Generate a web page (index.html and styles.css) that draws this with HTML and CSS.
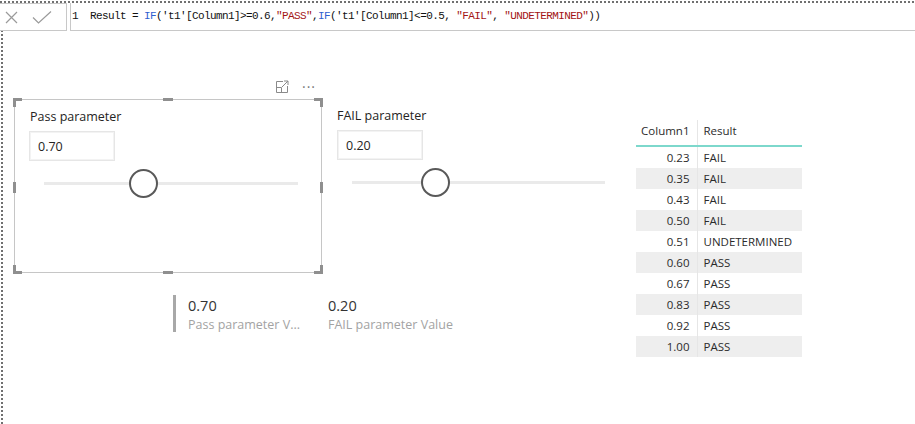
FILE: index.html
```html
<!DOCTYPE html>
<html>
<head>
<meta charset="utf-8">
<link rel="stylesheet" href="styles.css">
</head>
<body>
<div class="page">
  <div class="formulabar">
    <div class="fb-actions">
      <svg class="fb-icon" width="13" height="13" viewBox="0 0 13 13"><path d="M1 1 L12 12 M12 1 L1 12" stroke="#9a9a9a" stroke-width="1.2" fill="none"/></svg>
      <svg class="fb-icon check" width="20" height="13" viewBox="0 0 20 13"><path d="M1 6.5 L6.5 12 L19 0.5" stroke="#9a9a9a" stroke-width="1.2" fill="none"/></svg>
    </div>
    <div class="fb-formula"><span>1  Result = <span class="kw">IF</span>('t1'[Column1]&gt;=0.6,<span class="str">"PASS"</span>,<span class="kw">IF</span>('t1'[Column1]&lt;=0.5, <span class="str">"FAIL"</span>, <span class="str">"UNDETERMINED"</span>))</span></div>
  </div>

  <div class="canvas">
    <div class="visual slicer framed">
      <div class="vis-header">
        <svg width="15" height="14" viewBox="0 0 15 14"><path d="M8 1.5 H1.5 V12.5 H12.5 V6" stroke="#8a8a8a" stroke-width="1" fill="none"/><path d="M1.5 7.5 H6.5 V12.5" stroke="#8a8a8a" stroke-width="1" fill="none"/><path d="M7 7 L13 1 M9 1 H13 V5" stroke="#8a8a8a" stroke-width="1" fill="none"/></svg>
        <span class="more">···</span>
      </div>
      <span class="h h-tl"></span><span class="h h-tr"></span><span class="h h-bl"></span><span class="h h-br"></span>
      <span class="h h-tm"></span><span class="h h-bm"></span><span class="h h-lm"></span><span class="h h-rm"></span>
      <div class="slicer-title">Pass parameter</div>
      <div class="slicer-input first">0.70</div>
      <div class="slider s1"><div class="track"></div><div class="thumb" style="left:85px"></div></div>
    </div>

    <div class="visual slicer second">
      <div class="slicer-title">FAIL parameter</div>
      <div class="slicer-input">0.20</div>
      <div class="slider s2"><div class="track"></div><div class="thumb" style="left:69px"></div></div>
    </div>

    <div class="visual card">
      <div class="card-bar"></div>
      <div class="card-col c1">
        <div class="card-val">0.70</div>
        <div class="card-lbl">Pass parameter V...</div>
      </div>
      <div class="card-col">
        <div class="card-val">0.20</div>
        <div class="card-lbl">FAIL parameter Value</div>
      </div>
    </div>

    <div class="visual tbl">
      <table>
        <thead><tr><th class="num">Column1</th><th class="res">Result</th></tr></thead>
        <tbody>
          <tr><td class="num">0.23</td><td class="res">FAIL</td></tr>
          <tr><td class="num">0.35</td><td class="res">FAIL</td></tr>
          <tr><td class="num">0.43</td><td class="res">FAIL</td></tr>
          <tr><td class="num">0.50</td><td class="res">FAIL</td></tr>
          <tr><td class="num">0.51</td><td class="res">UNDETERMINED</td></tr>
          <tr><td class="num">0.60</td><td class="res">PASS</td></tr>
          <tr><td class="num">0.67</td><td class="res">PASS</td></tr>
          <tr><td class="num">0.83</td><td class="res">PASS</td></tr>
          <tr><td class="num">0.92</td><td class="res">PASS</td></tr>
          <tr><td class="num">1.00</td><td class="res">PASS</td></tr>
        </tbody>
      </table>
    </div>
  </div>
</div>
</body>
</html>
```
FILE: styles.css
```css
html, body {
  margin: 0;
  padding: 0;
  background: #fff;
}
body {
  font-family: "Open Sans", "Noto Sans", sans-serif;
  color: #252423;
}
.page {
  width: 915px;
  height: 424px;
  overflow: hidden;
  background-image:
    repeating-linear-gradient(to right, #707070 0 2px, transparent 2px 4px),
    repeating-linear-gradient(to bottom, #707070 0 2px, transparent 2px 4px);
  background-size: 100% 2px, 2px 400px;
  background-position: 0 1px, 1px 30px;
  background-repeat: no-repeat;
}
.formulabar {
  display: flex;
  height: 28px;
  padding-top: 3px;
}
.fb-actions {
  width: 67px;
  box-sizing: border-box;
  border: 1px solid #c8c8c8;
  border-left: none;
  background: #fff;
  display: flex;
  align-items: center;
  padding-left: 5px;
  padding-top: 1px;
  gap: 14px;
}
.fb-icon { display: block; }
.fb-formula {
  flex: 1;
  margin-left: 3px;
  box-sizing: border-box;
  border-left: 1px solid #c8c8c8;
  border-bottom: 1px solid #c8c8c8;
  background: #fff;
  font-family: "Liberation Mono", "DejaVu Sans Mono", monospace;
  font-size: 11px;
  letter-spacing: -0.6px;
  line-height: 26px;
  padding-left: 1px;
  color: #111;
  white-space: pre;
}
.kw { color: #2f5fd0; }
.str { color: #a31515; }

.canvas {
  position: relative;
  height: 393px;
}
.visual { position: absolute; }

.slicer {
  top: 68px;
  box-sizing: border-box;
  padding: 8px 0 0 15px;
  display: flex;
  flex-direction: column;
  align-items: flex-start;
}
.framed {
  left: 14px;
  width: 308px;
  height: 174px;
  border: 1px solid #c6c6c6;
}
.second {
  left: 322px;
  width: 300px;
  height: 174px;
}
.vis-header {
  position: absolute;
  top: -20px;
  right: 5px;
  display: flex;
  align-items: center;
  gap: 12px;
}
.vis-header svg { display: block; }
.more {
  font-size: 14px;
  color: #777;
  letter-spacing: 1px;
  line-height: 14px;
}
.h {
  position: absolute;
  background: #8f8f8f;
}
.h-tl, .h-tr, .h-bl, .h-br {
  background: transparent;
  width: 9px;
  height: 9px;
  border: 0 solid #8f8f8f;
  box-sizing: border-box;
}
.h-tl { top: -2px; left: -2px; border-top-width: 3px; border-left-width: 3px; }
.h-tr { top: -2px; right: -2px; border-top-width: 3px; border-right-width: 3px; }
.h-bl { bottom: -2px; left: -2px; border-bottom-width: 3px; border-left-width: 3px; }
.h-br { bottom: -2px; right: -2px; border-bottom-width: 3px; border-right-width: 3px; }
.h-tm { top: -2px; left: 148px; width: 10px; height: 3px; }
.h-bm { bottom: -2px; left: 148px; width: 10px; height: 3px; }
.h-lm { left: -2px; top: 82px; width: 3px; height: 11px; }
.h-rm { right: -2px; top: 82px; width: 3px; height: 11px; }

.slicer-title {
  font-size: 12.5px;
  line-height: 18px;
  height: 18px;
  color: #252423;
}
.slicer-input {
  margin-top: 5px;
  width: 86px;
  height: 30px;
  box-sizing: border-box;
  border: 1px solid #e6e6e6;
  box-shadow: inset 0 0 0 1px #f3f3f3;
  font-size: 12.5px;
  line-height: 29px;
  padding-left: 8px;
  color: #252423;
}
.slicer-input.first { margin-left: -1px; }
.slider {
  position: relative;
  margin-top: 8px;
  height: 30px;
}
.s1 { margin-left: 14px; width: 254px; }
.s2 { margin-left: 15px; width: 253px; }
.track {
  margin-top: 13px;
  height: 3px;
  background: #eaeaea;
}
.thumb {
  position: absolute;
  top: 0;
  width: 29px;
  height: 29px;
  box-sizing: border-box;
  border: 2.5px solid #595959;
  border-radius: 50%;
  background: #fff;
}

.card {
  left: 173px;
  top: 264px;
  display: flex;
  align-items: flex-start;
}
.card-bar {
  width: 3px;
  height: 37px;
  background: #a8a8a8;
}
.card-col {
  display: flex;
  flex-direction: column;
  margin-left: 12px;
}
.card-col.c1 { width: 128px; }
.card-val {
  font-size: 14.5px;
  line-height: 18px;
  margin-top: 2px;
  color: #333;
}
.card-lbl {
  font-size: 12.5px;
  line-height: 18px;
  margin-top: 1px;
  color: #a3a3a3;
  white-space: nowrap;
}

.tbl {
  left: 636px;
  top: 89px;
  width: 166px;
}
table {
  border-collapse: collapse;
  width: 166px;
  font-size: 11.5px;
  color: #2b2b2b;
}
th {
  font-weight: normal;
  height: 21px;
  padding: 0 0 4px 0;
  border-bottom: 2px solid #7dd8cc;
}
th.num { padding-right: 7px; }
th.res { padding-left: 6px; }
td {
  height: 21px;
  padding: 0;
}
.num {
  width: 61px;
  text-align: right;
  padding-right: 7px;
  box-sizing: border-box;
}
.res {
  text-align: left;
  padding-left: 6px;
  border-left: 1px solid #e6e6e6;
}
tbody tr:nth-child(even) td { background: #eeeeee; }
```
